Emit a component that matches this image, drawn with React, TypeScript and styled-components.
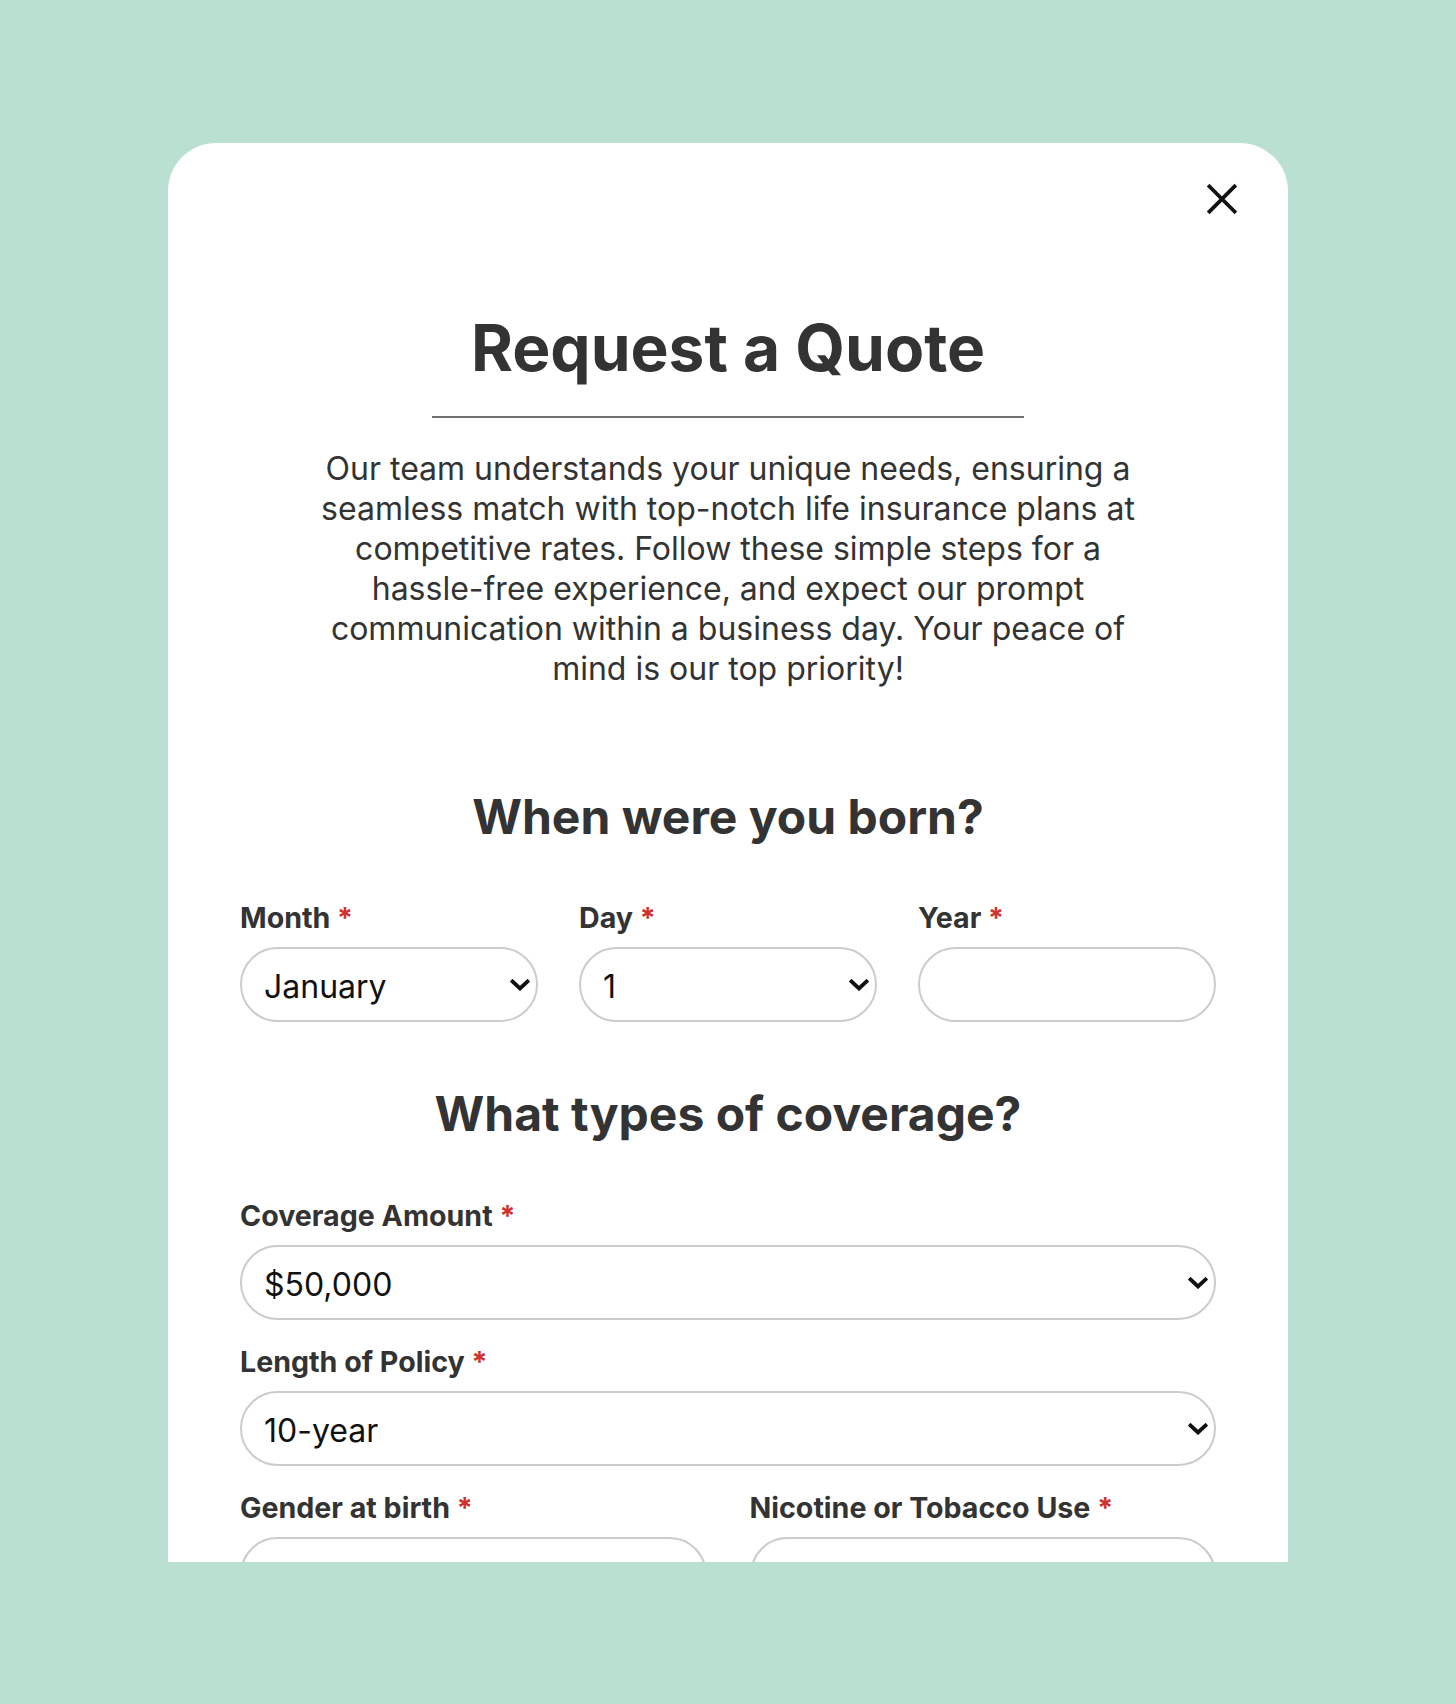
import React from 'react';
import styled, { createGlobalStyle } from 'styled-components';

const GlobalStyle = createGlobalStyle`
  html, body {
    margin: 0;
    padding: 0;
    background: #bae0d2;
  }
  body {
    font-family: Inter, "Noto Sans", sans-serif;
    color: #333333;
  }
  * {
    box-sizing: border-box;
  }
`;

type Option = string;

const months: Option[] = [
  'January', 'February', 'March', 'April', 'May', 'June',
  'July', 'August', 'September', 'October', 'November', 'December',
];
const days: Option[] = Array.from({ length: 31 }, (_, i) => String(i + 1));

export default function App() {
  return (
    <>
      <GlobalStyle />
      <Page>
        <Card>
          <TopBar>
            <CloseButton aria-label="Close">
              <svg width="32" height="32" viewBox="0 0 32 32">
                <path d="M3.5 3.5 L28.5 28.5 M28.5 3.5 L3.5 28.5" stroke="#111" strokeWidth="3.8" strokeLinecap="square" fill="none" />
              </svg>
            </CloseButton>
          </TopBar>

          <Title>Request a Quote</Title>
          <Rule />
          <Intro>
            Our team understands your unique needs, ensuring a<br />
            seamless match with top-notch life insurance plans at<br />
            competitive rates. Follow these simple steps for a<br />
            hassle-free experience, and expect our prompt<br />
            communication within a business day. Your peace of<br />
            mind is our top priority!
          </Intro>

          <SectionTitle>When were you born?</SectionTitle>
          <Grid $cols={3} $gap={41}>
            <Field>
              <Label>Month <Star>*</Star></Label>
              <SelectBox options={months} value="January" />
            </Field>
            <Field>
              <Label>Day <Star>*</Star></Label>
              <SelectBox options={days} value="1" />
            </Field>
            <Field>
              <Label>Year <Star>*</Star></Label>
              <TextInput type="text" />
            </Field>
          </Grid>

          <SectionTitle $after>What types of coverage?</SectionTitle>
          <Stack>
            <Field>
              <Label>Coverage Amount <Star>*</Star></Label>
              <SelectBox options={['$50,000', '$100,000', '$250,000', '$500,000', '$1,000,000']} value="$50,000" />
            </Field>
            <Field>
              <Label>Length of Policy <Star>*</Star></Label>
              <SelectBox options={['10-year', '15-year', '20-year', '30-year']} value="10-year" />
            </Field>
            <Grid $cols={2} $gap={43}>
              <Field>
                <Label>Gender at birth <Star>*</Star></Label>
                <SelectBox options={['', 'Male', 'Female']} value="" />
              </Field>
              <Field>
                <Label>Nicotine or Tobacco Use <Star>*</Star></Label>
                <SelectBox options={['', 'No', 'Yes']} value="" />
              </Field>
            </Grid>
          </Stack>
        </Card>
      </Page>
    </>
  );
}

const SelectBox: React.FC<{ options: Option[]; value: string }> = ({ options, value }) => (
  <SelectWrap>
    <Select defaultValue={value}>
      {options.map((o) => (
        <option key={o || 'empty'} value={o}>{o}</option>
      ))}
    </Select>
    <Chevron width="20" height="12" viewBox="0 0 20 12">
      <path d="M2.5 2.5 L10 9.5 L17.5 2.5" stroke="#111" strokeWidth="3.8" fill="none" strokeLinecap="square" />
    </Chevron>
  </SelectWrap>
);

const Page = styled.div`
  min-height: 1704px;
  padding: 143px 0;
  display: flex;
  justify-content: center;
  align-items: flex-start;
`;

const Card = styled.div`
  width: 1120px;
  height: 1419px;
  overflow: hidden;
  background: #ffffff;
  border-radius: 48px 48px 0 0;
  padding: 40px 72px 0;
`;

const TopBar = styled.div`
  display: flex;
  justify-content: flex-end;
  margin-right: -22px;
`;

const CloseButton = styled.button`
  width: 32px;
  height: 32px;
  padding: 0;
  border: none;
  background: transparent;
  cursor: pointer;
  display: flex;
  align-items: center;
  justify-content: center;
`;

const Title = styled.h1`
  margin: 95px 0 0;
  font-size: 64px;
  line-height: 1.2;
  font-weight: 700;
  text-align: center;
  color: #333333;
`;

const Rule = styled.div`
  width: 592px;
  height: 2px;
  margin: 29px auto 0;
  background: #707070;
`;

const Intro = styled.p`
  margin: 31px 0 0;
  font-size: 32px;
  line-height: 40px;
  font-weight: 400;
  text-align: center;
  color: #333333;
`;

const SectionTitle = styled.h2<{ $after?: boolean }>`
  margin: ${(p) => (p.$after ? '63px 0 56px' : '99px 0 55px')};
  font-size: 48px;
  line-height: 58px;
  font-weight: 700;
  text-align: center;
  color: #333333;
`;

const Grid = styled.div<{ $cols: number; $gap: number }>`
  display: grid;
  grid-template-columns: repeat(${(p) => p.$cols}, 1fr);
  column-gap: ${(p) => p.$gap}px;
`;

const Stack = styled.div`
  display: flex;
  flex-direction: column;
  gap: 25px;
`;

const Field = styled.div`
  display: flex;
  flex-direction: column;
  gap: 12px;
`;

const Label = styled.label`
  font-size: 28.6px;
  line-height: 34px;
  font-weight: 700;
  color: #333333;
`;

const Star = styled.span`
  color: #d0312d;
`;

const SelectWrap = styled.div`
  position: relative;
`;

const Select = styled.select`
  width: 100%;
  height: 75px;
  padding: 4px 48px 0 22px;
  border: 2px solid #cccccc;
  border-radius: 38px;
  background: #ffffff;
  font-family: Inter, "Noto Sans", sans-serif;
  font-size: 32px;
  color: #111111;
  appearance: none;
  -webkit-appearance: none;
  outline: none;
`;

const Chevron = styled.svg`
  position: absolute;
  right: 8px;
  top: 32px;
  pointer-events: none;
`;

const TextInput = styled.input`
  width: 100%;
  height: 75px;
  padding: 4px 22px 0;
  border: 2px solid #cccccc;
  border-radius: 38px;
  background: #ffffff;
  font-family: Inter, "Noto Sans", sans-serif;
  font-size: 32px;
  color: #111111;
  outline: none;
`;
